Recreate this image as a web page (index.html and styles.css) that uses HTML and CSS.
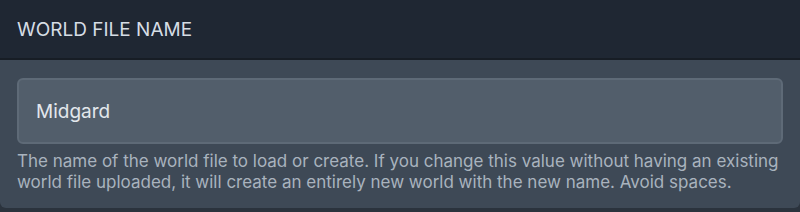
FILE: index.html
```html
<!DOCTYPE html>
<html lang="en">
<head>
  <meta charset="UTF-8">
  <meta name="viewport" content="width=device-width, initial-scale=1.0">
  <title>World File Name</title>
  <link rel="stylesheet" href="styles.css">
</head>
<body>
  <div class="card">
    <div class="card-header">World File Name</div>
    <div class="card-body">
      <input type="text" class="field" id="worldName" value="Midgard" />
      <p class="help">The name of the world file to load or create. If you change this value without having an existing world file uploaded, it will create an entirely new world with the new name. Avoid spaces.</p>
    </div>
  </div>
</body>
</html>
```

FILE: styles.css
```css
body {
  margin: 0;
  padding: 0;
  background-color: #2b333d;
  font-family: Inter, "Noto Sans", sans-serif;
}

.card {
  background: #3e4956;
  border-radius: 0 0 6px 6px;
  height: 208px;
  overflow: hidden;
}

.card-header {
  background: #1f2733;
  height: 60px;
  border-bottom: 2px solid #171d25;
  box-sizing: border-box;
  padding: 0 17px 0 17px;
  display: flex;
  align-items: center;
  color: #d6dde5;
  font-size: 19px;
  text-transform: uppercase;
}

.card-body {
  padding: 18px 17px 0;
}

.field {
  display: block;
  width: 100%;
  height: 66px;
  box-sizing: border-box;
  padding: 0 17px;
  background: #525e6b;
  border: 2px solid #5e6a77;
  border-radius: 6px;
  color: #e2e7ec;
  font-family: Inter, "Noto Sans", sans-serif;
  font-size: 19px;
  outline: none;
}

.help {
  margin: 7px 0 0;
  color: #a9b3be;
  font-family: Inter, "Noto Sans", sans-serif;
  font-size: 17px;
  line-height: 21px;
}
```
